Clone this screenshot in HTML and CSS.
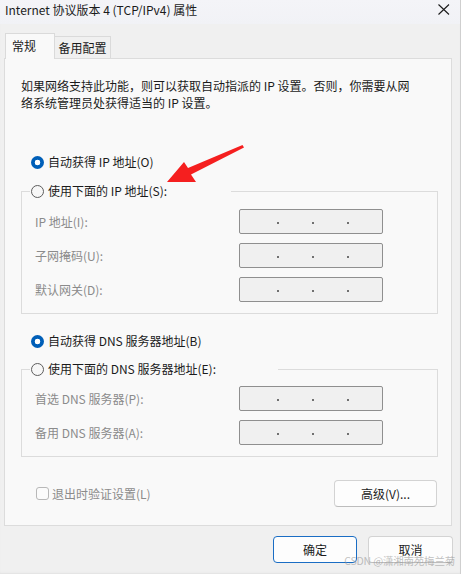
FILE: index.html
```html
<!DOCTYPE html>
<html lang="zh-CN">
<head>
<meta charset="utf-8">
<title>Internet 协议版本 4 (TCP/IPv4) 属性</title>
<link rel="stylesheet" href="styles.css">
</head>
<body>
<div class="window">
  <div class="titlebar">
    <span class="title">Internet 协议版本 4 (TCP/IPv4) 属性</span>
    <svg class="close" width="12" height="11" viewBox="0 0 12 11"><path d="M0.5 0.5 L11 10.5 M11 0.5 L0.5 10.5" stroke="#1b1b1b" stroke-width="1.1" fill="none"/></svg>
  </div>
  <div class="tabs">
    <div class="tab active">常规</div>
    <div class="tab">备用配置</div>
  </div>
  <div class="panel">
    <p class="desc">如果网络支持此功能，则可以获取自动指派的 IP 设置。否则，你需要从网<br>络系统管理员处获得适当的 IP 设置。</p>

    <div class="radio-row first"><span class="radio on"></span><span>自动获得 IP 地址(O)</span></div>
    <fieldset class="group ip">
      <legend class="legend-ip"><span class="radio-row inner"><span class="radio"></span><span>使用下面的 IP 地址(S):</span></span></legend>
      <div class="rows first-rows">
        <div class="row"><span class="lbl">IP 地址(I):</span><span class="field"><span class="seg"></span><i></i><span class="seg"></span><i></i><span class="seg"></span><i></i><span class="seg"></span></span></div>
        <div class="row"><span class="lbl">子网掩码(U):</span><span class="field"><span class="seg"></span><i></i><span class="seg"></span><i></i><span class="seg"></span><i></i><span class="seg"></span></span></div>
        <div class="row"><span class="lbl">默认网关(D):</span><span class="field"><span class="seg"></span><i></i><span class="seg"></span><i></i><span class="seg"></span><i></i><span class="seg"></span></span></div>
      </div>
    </fieldset>

    <div class="radio-row dns-auto"><span class="radio on"></span><span>自动获得 DNS 服务器地址(B)</span></div>
    <fieldset class="group dns">
      <legend class="legend-dns"><span class="radio-row inner"><span class="radio"></span><span>使用下面的 DNS 服务器地址(E):</span></span></legend>
      <div class="rows dns-rows">
        <div class="row"><span class="lbl">首选 DNS 服务器(P):</span><span class="field"><span class="seg"></span><i></i><span class="seg"></span><i></i><span class="seg"></span><i></i><span class="seg"></span></span></div>
        <div class="row"><span class="lbl">备用 DNS 服务器(A):</span><span class="field"><span class="seg"></span><i></i><span class="seg"></span><i></i><span class="seg"></span><i></i><span class="seg"></span></span></div>
      </div>
    </fieldset>

    <div class="panel-foot">
      <label class="check"><span class="box"></span><span>退出时验证设置(L)</span></label>
      <button class="btn adv">高级(V)...</button>
    </div>
  </div>
  <div class="footer">
    <button class="btn ok">确定</button>
    <button class="btn cancel">取消</button>
  </div>
  <div class="watermark">CSDN @潇湘南苑梅兰菊</div>
  <svg class="arrow" width="460" height="574" viewBox="0 0 460 574"><polygon points="167,182 184,162 188,168 242.5,145 244,147.5 191,174.5 196,182" fill="#f51f1f"/></svg>
</div>
</body>
</html>
```

FILE: styles.css
```css
html, body {
  margin: 0;
  padding: 0;
  background: #ffffff;
}
body {
  font-family: "Noto Sans CJK SC", "Noto Sans", sans-serif;
  font-size: 12px;
  color: #1b1b1b;
}
.window {
  position: relative;
  width: 460px;
  height: 574px;
  background: #f0f0f0;
  border-right: 1px solid #cfcfcf;
  overflow: hidden;
  box-shadow: inset 0 -2px 2px -1px #e2e2e2;
}
.titlebar {
  height: 24px;
  display: flex;
  justify-content: space-between;
  align-items: flex-start;
  padding-left: 5px;
  background: linear-gradient(#f4f4f8, #f1f2f6);
}
.title {
  line-height: 20px;
  white-space: nowrap;
}
.close {
  margin-top: 4px;
  margin-right: 10px;
}
.tabs {
  display: flex;
  align-items: flex-end;
  height: 25px;
  margin-top: 9px;
  padding-left: 5px;
}
.tab {
  box-sizing: border-box;
  border: 1px solid #dadada;
  border-bottom: 0;
  white-space: nowrap;
}
.tab.active {
  position: relative;
  z-index: 1;
  width: 50px;
  height: 26px;
  margin-bottom: -1px;
  padding-left: 6px;
  line-height: 24px;
  background: #f9f9f9;
}
.tab:not(.active) {
  width: 56px;
  height: 22px;
  border-left: 0;
  line-height: 21px;
  text-align: center;
  background: #f0f0f0;
}
.panel {
  box-sizing: border-box;
  margin-left: 4px;
  width: 448px;
  height: 468px;
  border: 1px solid #dcdcdc;
  background: #f9f9f9;
  padding: 18px 13px 0 16px;
}
.desc {
  margin: 0;
  line-height: 17px;
  white-space: nowrap;
}
.radio-row {
  display: flex;
  align-items: center;
  gap: 4px;
  height: 18px;
  line-height: 18px;
  white-space: nowrap;
}
.radio-row.first {
  margin: 42px 0 0 10px;
}
.radio-row.dns-auto {
  margin: 18px 0 0 10px;
}
.radio-row.inner {
  margin: 0;
}
.radio {
  box-sizing: border-box;
  width: 13px;
  height: 13px;
  border-radius: 50%;
  border: 1px solid #5d5d5d;
  background: #f7f7f7;
  flex: none;
}
.radio.on {
  border: 0;
  background: radial-gradient(circle, #ffffff 0 2.6px, #005fb8 3.1px);
}
.group {
  box-sizing: border-box;
  width: 417px;
  margin: 11px 0 0 0;
  padding: 0 0 11px 0;
  border: 1px solid #dcdcdc;
  min-width: 0;
}
.group.dns {
  margin-top: 10px;
}
.group legend {
  box-sizing: border-box;
  margin-left: 8px;
  padding: 0 0 0 1px;
  height: 18px;
}
.legend-ip {
  width: 201px;
}
.legend-dns {
  width: 248px;
}
.rows {
  display: flex;
  flex-direction: column;
  gap: 9px;
  padding-left: 13px;
}
.first-rows {
  padding-top: 9px;
}
.dns-rows {
  padding-top: 8px;
}
.row {
  display: flex;
  align-items: center;
  height: 25px;
}
.lbl {
  width: 204px;
  color: #8b8b8b;
  white-space: nowrap;
}
.field {
  box-sizing: border-box;
  display: flex;
  align-items: center;
  width: 144px;
  height: 25px;
  padding-left: 4px;
  border: 1px solid #8f8f8f;
  border-radius: 2px;
  background: #f0f0f0;
}
.seg {
  flex: 1;
}
.field i {
  width: 2px;
  height: 2px;
  margin-top: 3px;
  background: #707070;
  flex: none;
}
.panel-foot {
  display: flex;
  justify-content: space-between;
  align-items: center;
  height: 27px;
  margin-top: 23px;
}
.check {
  display: flex;
  align-items: center;
  gap: 3px;
  margin-left: 15px;
  color: #8b8b8b;
  white-space: nowrap;
}
.box {
  box-sizing: border-box;
  width: 13px;
  height: 13px;
  border: 1px solid #b8b8b8;
  border-radius: 3px;
  background: #fbfbfb;
}
.btn {
  box-sizing: border-box;
  height: 27px;
  padding: 0;
  font-family: inherit;
  font-size: 12px;
  color: #1b1b1b;
  background: #fdfdfd;
  border: 1px solid #d3d3d3;
  border-bottom-color: #bdbdbd;
  border-radius: 4px;
}
.btn.adv {
  width: 103px;
  margin-right: 1px;
}
.footer {
  display: flex;
  justify-content: flex-end;
  gap: 11px;
  margin-top: 10px;
  padding-right: 7px;
}
.btn.ok {
  width: 84px;
  border: 1px solid #1a6dc4;
}
.btn.cancel {
  width: 85px;
}
.watermark {
  position: absolute;
  right: 5px;
  bottom: 7px;
  font-size: 10.5px;
  line-height: 13px;
  letter-spacing: -0.2px;
  color: rgba(150, 150, 150, 0.6);
  white-space: nowrap;
}
.arrow {
  position: absolute;
  left: 0;
  top: 0;
  pointer-events: none;
}
```
